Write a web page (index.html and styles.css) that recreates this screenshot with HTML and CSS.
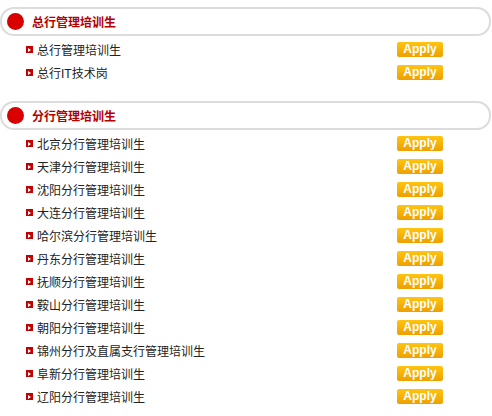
FILE: index.html
```html
<!DOCTYPE html>
<html lang="zh-CN">
<head>
    <meta charset="UTF-8">
    <title>招聘岗位</title>
    <link rel="stylesheet" href="styles.css">
</head>
<body>
    <div class="section">
        <h2 class="section-title"><span class="dot"></span>总行管理培训生</h2>
        <ul class="jobs">
            <li class="job"><span class="bullet"></span><span class="job-name">总行管理培训生</span><a class="apply" href="#">Apply</a></li>
            <li class="job"><span class="bullet"></span><span class="job-name">总行IT技术岗</span><a class="apply" href="#">Apply</a></li>
        </ul>
    </div>

    <div class="section">
        <h2 class="section-title"><span class="dot"></span>分行管理培训生</h2>
        <ul class="jobs">
            <li class="job"><span class="bullet"></span><span class="job-name">北京分行管理培训生</span><a class="apply" href="#">Apply</a></li>
            <li class="job"><span class="bullet"></span><span class="job-name">天津分行管理培训生</span><a class="apply" href="#">Apply</a></li>
            <li class="job"><span class="bullet"></span><span class="job-name">沈阳分行管理培训生</span><a class="apply" href="#">Apply</a></li>
            <li class="job"><span class="bullet"></span><span class="job-name">大连分行管理培训生</span><a class="apply" href="#">Apply</a></li>
            <li class="job"><span class="bullet"></span><span class="job-name">哈尔滨分行管理培训生</span><a class="apply" href="#">Apply</a></li>
            <li class="job"><span class="bullet"></span><span class="job-name">丹东分行管理培训生</span><a class="apply" href="#">Apply</a></li>
            <li class="job"><span class="bullet"></span><span class="job-name">抚顺分行管理培训生</span><a class="apply" href="#">Apply</a></li>
            <li class="job"><span class="bullet"></span><span class="job-name">鞍山分行管理培训生</span><a class="apply" href="#">Apply</a></li>
            <li class="job"><span class="bullet"></span><span class="job-name">朝阳分行管理培训生</span><a class="apply" href="#">Apply</a></li>
            <li class="job"><span class="bullet"></span><span class="job-name">锦州分行及直属支行管理培训生</span><a class="apply" href="#">Apply</a></li>
            <li class="job"><span class="bullet"></span><span class="job-name">阜新分行管理培训生</span><a class="apply" href="#">Apply</a></li>
            <li class="job"><span class="bullet"></span><span class="job-name">辽阳分行管理培训生</span><a class="apply" href="#">Apply</a></li>
        </ul>
    </div>
</body>
</html>
```

FILE: styles.css
```css
body {
    margin: 0;
    padding-top: 7px;
    font-family: "Liberation Sans", "Noto Sans CJK SC", sans-serif;
    font-size: 12px;
    color: #222;
    background: #fff;
}
.section {
    margin-bottom: 17px;
}
.section-title {
    display: flex;
    align-items: center;
    width: 491px;
    height: 29px;
    box-sizing: border-box;
    margin: 0 0 2px 0;
    padding-left: 5px;
    border: 2px solid #dcdcdc;
    border-radius: 14px;
    font-size: 12px;
    font-weight: bold;
    color: #b30000;
}
.dot {
    width: 17px;
    height: 17px;
    border-radius: 50%;
    background: #d90000;
    margin-right: 8px;
}
.jobs {
    list-style: none;
    margin: 0;
    padding: 0;
}
.job {
    display: flex;
    align-items: center;
    height: 23px;
    padding-left: 26px;
}
.bullet {
    position: relative;
    width: 7px;
    height: 7px;
    background: #c40000;
    margin-right: 4px;
}
.bullet::after {
    content: "";
    position: absolute;
    left: 2px;
    top: 1.5px;
    border-left: 3px solid #fff;
    border-top: 2px solid transparent;
    border-bottom: 2px solid transparent;
}
.job-name {
    flex: 1;
}
.apply {
    width: 46px;
    height: 15px;
    line-height: 15px;
    margin-right: 49px;
    border-radius: 2px;
    background: linear-gradient(#ffc410, #eda000);
    color: #fff;
    font-size: 12px;
    font-weight: bold;
    text-align: center;
    text-decoration: none;
}
```
